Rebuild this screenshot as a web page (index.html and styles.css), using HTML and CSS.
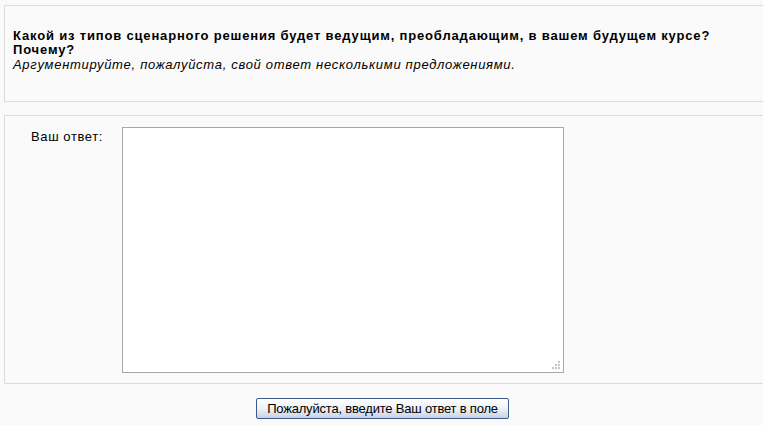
FILE: index.html
```html
<!DOCTYPE html>
<html lang="ru">

<head>
  <meta charset="UTF-8">
  <title>Вопрос</title>
  <link rel="stylesheet" href="styles.css">
</head>

<body>
  <div class="stranica">
    <div class="vopros">
      <p class="tekst"><strong>Какой из типов сценарного решения будет ведущим, преобладающим, в вашем будущем курсе? Почему?</strong><br>
        <em>Аргументируйте, пожалуйста, свой ответ несколькими предложениями.</em></p>
    </div>

    <div class="otvet">
      <label class="metka" for="pole">Ваш ответ:</label>
      <span class="obertka">
        <textarea id="pole" class="pole"></textarea>
        <svg class="ugol" width="8" height="8" viewBox="0 0 8 8">
          <rect x="6" y="0" width="2" height="2" fill="#c4c4c4"/>
          <rect x="3" y="3" width="2" height="2" fill="#c4c4c4"/>
          <rect x="6" y="3" width="2" height="2" fill="#c4c4c4"/>
          <rect x="0" y="6" width="2" height="2" fill="#c4c4c4"/>
          <rect x="3" y="6" width="2" height="2" fill="#c4c4c4"/>
          <rect x="6" y="6" width="2" height="2" fill="#c4c4c4"/>
        </svg>
      </span>
    </div>
  </div>

  <div class="knopki">
    <button class="knopka">Пожалуйста, введите Ваш ответ в поле</button>
  </div>
</body>

</html>
```

FILE: styles.css
```css
html,
body {
  margin: 0;
  padding: 0;
  overflow: hidden;
}

body {
  font-family: "Liberation Sans", Arial, sans-serif;
  font-size: 13px;
  color: #000;
  background-color: #fafafa;
}

.stranica {
  width: 820px;
  padding: 5px 0 0 4px;
}

.vopros {
  border: 1px solid #dcdcdc;
  height: 95px;
  padding: 0 8px;
}

.tekst {
  margin: 23px 0 0;
  line-height: 14px;
  width: 710px;
}

.tekst strong {
  letter-spacing: 0.83px;
}

.tekst em {
  display: inline-block;
  margin-top: 1px;
  letter-spacing: 0.7px;
}

.otvet {
  margin-top: 13px;
  border: 1px solid #dcdcdc;
  display: flex;
  align-items: flex-start;
  padding: 11px 0 10px;
}

.metka {
  width: 98px;
  text-align: right;
  padding-top: 2px;
  margin-right: 19px;
  letter-spacing: 0.6px;
}

.obertka {
  position: relative;
  display: block;
  line-height: 0;
}

.pole {
  margin: 0;
  padding: 2px;
  box-sizing: border-box;
  width: 442px;
  height: 246px;
  border: 1px solid #a8a8a8;
  background: #fff;
  resize: none;
  font-family: "Liberation Sans", Arial, sans-serif;
  font-size: 13px;
}

.ugol {
  position: absolute;
  right: 4px;
  bottom: 4px;
}

.knopki {
  text-align: center;
  margin-top: 14px;
}

.knopka {
  width: 253px;
  height: 21px;
  padding: 0;
  margin-left: 2px;
  font-family: "Liberation Sans", Arial, sans-serif;
  font-size: 13px;
  letter-spacing: -0.2px;
  color: #000;
  border: 1px solid #3c5a8c;
  border-radius: 2px;
  background: linear-gradient(#ffffff, #eef1f7 50%, #c9d2e2);
  cursor: pointer;
}
```
